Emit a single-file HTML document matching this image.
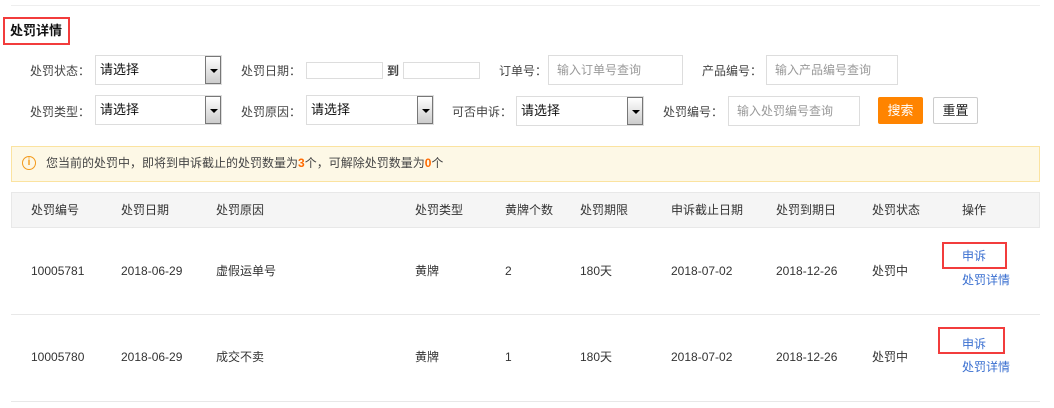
<!DOCTYPE html>
<html><head><meta charset="utf-8"><style>
*{margin:0;padding:0;box-sizing:border-box}
body{width:1054px;height:408px;background:#fff;font-family:"Liberation Sans","Noto Sans CJK SC",sans-serif;font-size:12px;color:#333;position:relative;overflow:hidden}
.a{position:absolute;white-space:nowrap;line-height:16px;height:16px}
.sel{position:absolute;border:1px solid #ddd;background:#fff;height:30px;padding-left:4px;line-height:28px;color:#111;font-size:13px}
.sel i{position:absolute;right:0;top:0;width:16px;height:28px;border:1px solid #777;background:linear-gradient(#fff,#ccc)}
.sel i:after{content:"";position:absolute;left:4px;top:12px;border-left:4px solid transparent;border-right:4px solid transparent;border-top:4px solid #000}
.inp{position:absolute;border:1px solid #ddd;height:30px;line-height:28px;padding-left:8px;color:#999}
.lbl{position:absolute;color:#444;line-height:16px;white-space:nowrap}
.red{position:absolute;border:2px solid #f23c3c}
.lnk{position:absolute;color:#3a6fd0;line-height:16px;white-space:nowrap}
.box{position:absolute}
</style></head><body>
<div class="box" style="left:11px;top:5px;width:1029px;height:1px;background:#eee"></div>
<div class="red" style="left:3px;top:17px;width:67px;height:28px"></div>
<div class="a" style="left:10px;top:23px;font-weight:bold;font-size:13px;color:#111">处罚详情</div>

<div class="lbl" style="left:30px;top:63px">处罚状态：</div>
<div class="sel" style="left:95px;top:55px;width:127px">请选择<i></i></div>
<div class="lbl" style="left:241px;top:63px">处罚日期：</div>
<div class="inp" style="left:306px;top:62px;width:77px;height:17px"></div>
<div class="lbl" style="left:387px;top:63px;font-weight:bold">到</div>
<div class="inp" style="left:403px;top:62px;width:77px;height:17px"></div>
<div class="lbl" style="left:499px;top:63px">订单号：</div>
<div class="inp" style="left:548px;top:55px;width:135px">输入订单号查询</div>
<div class="lbl" style="left:702px;top:63px">产品编号：</div>
<div class="inp" style="left:766px;top:55px;width:132px">输入产品编号查询</div>

<div class="lbl" style="left:30px;top:104px">处罚类型：</div>
<div class="sel" style="left:95px;top:95px;width:127px">请选择<i></i></div>
<div class="lbl" style="left:241px;top:104px">处罚原因：</div>
<div class="sel" style="left:306px;top:95px;width:128px">请选择<i></i></div>
<div class="lbl" style="left:452px;top:104px">可否申诉：</div>
<div class="sel" style="left:516px;top:96px;width:128px">请选择<i></i></div>
<div class="lbl" style="left:663px;top:104px">处罚编号：</div>
<div class="inp" style="left:728px;top:96px;width:132px">输入处罚编号查询</div>
<div class="box" style="left:878px;top:97px;width:45px;height:27px;background:#ff8400;color:#fff;border-radius:2px;text-align:center;line-height:27px;font-size:13px">搜索</div>
<div class="box" style="left:933px;top:97px;width:45px;height:27px;border:1px solid #ccc;border-radius:2px;text-align:center;line-height:25px;font-size:13px;color:#222">重置</div>

<div class="box" style="left:11px;top:146px;width:1029px;height:36px;background:#fdf8e6;border:1px solid #fbe3a0"></div>
<div class="box" style="left:22px;top:156px;width:14px;height:14px;border:1.5px solid #f39a1c;border-radius:50%;color:#f39a1c;font-size:10px;text-align:center;line-height:11px;font-weight:bold">i</div>
<div class="a" style="left:46px;top:155px;color:#444">您当前的处罚中，即将到申诉截止的处罚数量为<b style="color:#ff6a00">3</b>个，可解除处罚数量为<b style="color:#ff6a00">0</b>个</div>

<div class="box" style="left:11px;top:192px;width:1029px;height:36px;background:#f5f5f5;border:1px solid #e8e8e8"></div>
<div class="a" style="left:31px;top:202px">处罚编号</div>
<div class="a" style="left:121px;top:202px">处罚日期</div>
<div class="a" style="left:216px;top:202px">处罚原因</div>
<div class="a" style="left:415px;top:202px">处罚类型</div>
<div class="a" style="left:505px;top:202px">黄牌个数</div>
<div class="a" style="left:580px;top:202px">处罚期限</div>
<div class="a" style="left:671px;top:202px">申诉截止日期</div>
<div class="a" style="left:776px;top:202px">处罚到期日</div>
<div class="a" style="left:872px;top:202px">处罚状态</div>
<div class="a" style="left:962px;top:202px">操作</div>

<div class="a" style="left:31px;top:263px">10005781</div>
<div class="a" style="left:121px;top:263px">2018-06-29</div>
<div class="a" style="left:216px;top:263px">虚假运单号</div>
<div class="a" style="left:415px;top:263px">黄牌</div>
<div class="a" style="left:505px;top:263px">2</div>
<div class="a" style="left:580px;top:263px">180天</div>
<div class="a" style="left:671px;top:263px">2018-07-02</div>
<div class="a" style="left:776px;top:263px">2018-12-26</div>
<div class="a" style="left:872px;top:263px">处罚中</div>
<div class="red" style="left:942px;top:242px;width:65px;height:27px"></div>
<div class="lnk" style="left:962px;top:248px">申诉</div>
<div class="lnk" style="left:962px;top:272px">处罚详情</div>
<div class="box" style="left:11px;top:314px;width:1029px;height:1px;background:#e8e8e8"></div>

<div class="a" style="left:31px;top:349px">10005780</div>
<div class="a" style="left:121px;top:349px">2018-06-29</div>
<div class="a" style="left:216px;top:349px">成交不卖</div>
<div class="a" style="left:415px;top:349px">黄牌</div>
<div class="a" style="left:505px;top:349px">1</div>
<div class="a" style="left:580px;top:349px">180天</div>
<div class="a" style="left:671px;top:349px">2018-07-02</div>
<div class="a" style="left:776px;top:349px">2018-12-26</div>
<div class="a" style="left:872px;top:349px">处罚中</div>
<div class="red" style="left:938px;top:327px;width:67px;height:27px"></div>
<div class="lnk" style="left:962px;top:336px">申诉</div>
<div class="lnk" style="left:962px;top:359px">处罚详情</div>
<div class="box" style="left:11px;top:401px;width:1029px;height:1px;background:#e8e8e8"></div>
</body></html>
